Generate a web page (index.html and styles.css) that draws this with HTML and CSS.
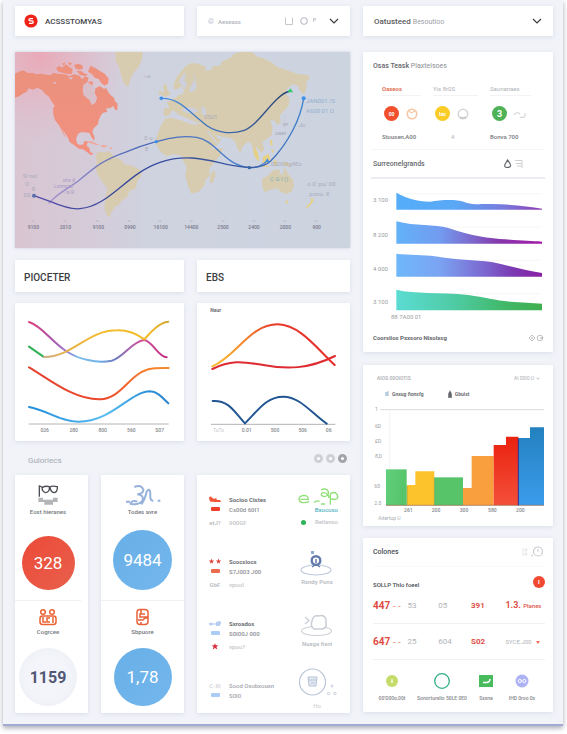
FILE: index.html
```html
<!DOCTYPE html>
<html lang="en">
<head>
<meta charset="utf-8">
<title>Dashboard</title>
<link rel="stylesheet" href="styles.css">
</head>
<body>
<main class="frame">
  <div class="main-col">
    <div class="pair top-row">
      <header class="card bar">
        <svg class="logo" viewBox="0 0 14 14" aria-hidden="true"><circle cx="7" cy="7" r="6.6" fill="#ee2418"/><path d="M9 4.6H6.2Q5 4.6 5 5.7T6.2 6.9H8Q9.2 6.9 9.2 8.1T8 9.4H5" fill="none" stroke="#fff" stroke-width="1.3"/></svg>
        <h1 class="brand">ACSSSTOMYAS</h1>
      </header>
      <div class="card bar tools">
        <svg class="tool-dot" viewBox="0 0 8 8" aria-hidden="true"><circle cx="4" cy="4" r="3" fill="#dcdfe6"/><path d="M4 4h4M1 2l3 2" stroke="#f7f8fa" stroke-width="1"/></svg>
        <span class="tool-name">Aeseass</span>
        <svg class="tool-icons" viewBox="0 0 34 10" aria-hidden="true"><path d="M1.500 1.500V8.500H8.500V1.500" fill="none" stroke="#c3c6cc"/><circle cx="20" cy="5" r="3.200" fill="none" stroke="#b9bdc4" stroke-width="1.100"/><path d="M29.500 6V2.500H31.500V4H29.500" fill="none" stroke="#b9bdc4" stroke-width=".8"/></svg>
        <button class="chev" aria-label="Open"><svg viewBox="0 0 10 6"><path d="M1 1l4 4 4-4"/></svg></button>
      </div>
    </div>

    <section class="map">
      <svg viewBox="45 21 1005 588" role="img" aria-label="World map">
        <defs>
          <linearGradient id="sea"><stop offset="0" stop-color="#d9c5d2"/><stop offset=".18" stop-color="#d6cad7"/><stop offset=".42" stop-color="#cfd3e0"/><stop offset="1" stop-color="#ccd4e0"/></linearGradient>
          <radialGradient id="glow" gradientUnits="userSpaceOnUse" cx="120" cy="30" r="270"><stop offset="0" stop-color="#ef9fae" stop-opacity=".75"/><stop offset="1" stop-color="#e9b6c4" stop-opacity="0"/></radialGradient>
          <linearGradient id="na" x2="0" y2="1"><stop offset="0" stop-color="#ea917c"/><stop offset="1" stop-color="#f39080"/></linearGradient>
          <linearGradient id="ln1"><stop offset="0" stop-color="#4a90dd"/><stop offset=".45" stop-color="#3f6db5"/><stop offset="1" stop-color="#27406f"/></linearGradient>
          <linearGradient id="ln2"><stop offset="0" stop-color="#a793cd"/><stop offset=".4" stop-color="#4c68b8"/><stop offset="1" stop-color="#4686d2"/></linearGradient>
          <linearGradient id="ln3"><stop offset="0" stop-color="#554ca9"/><stop offset=".35" stop-color="#35489b"/><stop offset=".8" stop-color="#3a5aa2"/><stop offset="1" stop-color="#3f83cf"/></linearGradient>
        </defs>
        <rect x="45" y="21" width="1005" height="588" fill="url(#sea)"/>
        <rect x="45" y="21" width="400" height="320" fill="url(#glow)"/>
        <g fill="url(#na)">
          <path d="M45 86L56 80 70 76 84 84 97 83 108 88 122 86 150 91 160 84 172 86 195 88 207 94 222 88 238 92 246 102 256 94 266 98 262 112 250 120 248 140 262 148 268 163 277 180 287 172 291 158 284 145 286 130 300 123 312 132 318 128 326 143 334 152 342 158 345 168 353 176 352 196 345 194 340 183 330 190 318 190 322 200 308 204 302 212 296 225 294 238 281 250 277 260 284 278 282 287 274 276 268 264 254 262 242 262 234 267 228 282 232 296 240 300 250 298 253 288 264 288 260 302 268 308 271 321 281 326 272 331 262 322 248 313 236 311 222 300 209 292 204 278 193 262 186 252 194 270 200 281 190 268 184 254 178 242 165 226 160 208 159 190 164 182 154 168 146 154 136 148 126 135 112 128 98 134 86 130 80 140 68 146 58 154 45 158Z"/>
          <path d="M271 62L284 68 296 76 312 85 326 100 324 116 313 122 302 112 296 102 284 98 276 88 264 80Z"/>
          <path d="M168 70L178 62 186 68 198 58 208 66 218 72 216 86 204 88 190 84 176 80ZM222 60L236 56 248 62 248 72 236 74 226 70ZM230 78L244 78 254 86 264 88 256 94 240 90ZM204 52L216 54 210 62ZM186 56L196 52 192 62ZM268 108L280 112 276 122 264 116Z"/>
          <path d="M254 290L272 288 290 296 300 300 286 299 270 293ZM304 300L320 301 318 307 304 306ZM328 306l8 2-3 6z" fill="#f2a598"/>
        </g>
        <path d="M250 123L268 114 282 128 283 145 290 160 284 172 276 180 268 165 250 150ZM205 98l14-2-6 8zM160 110l10 2-6 6z" fill="#d9bfca"/>
        <g fill="#d8ccb0">
          <path d="M347 21H428L425 46 416 66 402 82 392 98 387 120 380 126 370 110 362 86 356 64 346 46Z"/>
          <path d="M286 330L297 320 312 322 328 319 342 334 364 346 374 358 396 362 420 374 425 390 412 408 407 430 388 438 380 458 366 466 356 480 344 486 336 500 328 506 336 515 322 513 313 492 316 462 322 428 306 410 292 388 286 366 291 348Z"/>
          <path d="M524 136L520 120 528 98 542 82 556 64 574 54 596 56 618 66 614 78 634 74 640 62 660 62 668 48 690 40 702 26 720 21H758L770 34 794 42 812 50 832 66 862 76 890 86 926 91 928 102 918 112 920 128 912 148 900 138 895 124 880 118 862 130 855 143 868 160 866 182 850 200 840 210 842 232 832 240 822 226 810 228 818 246 815 270 798 284 786 290 792 308 788 324 778 316 768 306 770 330 778 346 768 340 760 316 752 292 742 292 728 304 722 322 714 316 706 290 690 278 670 276 648 270 640 264 654 280 664 284 650 302 624 314 610 286 596 262 602 242 580 238 568 226 562 236 550 216 544 212 552 232 538 222 530 202 516 196 510 208 498 215 490 207 492 190 508 190 500 172 520 162 536 150 548 148 552 136 546 124Z"/>
          <path d="M488 122L500 116 502 132 512 148 496 156 484 150 492 138ZM476 140l8-4 2 12-9 3z"/>
          <path d="M494 222L530 214 544 216 548 228 566 236 578 232 604 240 612 262 624 286 636 312 670 310 660 332 642 352 628 372 629 392 618 402 612 424 596 440 574 446 564 424 556 392 560 366 548 346 546 332 522 328 498 333 480 318 468 298 470 274 482 244Z"/>
          <path d="M632 388L645 374 646 392 637 416 629 410Z"/>
          <path d="M786 402L804 392 814 380 826 374 840 374 838 386 848 390 854 366 864 386 880 406 882 424 874 440 858 448 842 440 832 430 810 434 794 442 787 428Z"/>
        </g>
        <g fill="#e6cf87"><path d="M762 306L774 322 778 350 766 338 760 322ZM788 336L806 326 812 342 800 358 788 352ZM822 346l9 2-2 16-6-2zM846 352l16 3 12 10-18-4zM810 284l6 2 2 16-7-2zM814 312l8 4-5 9zM934 458L942 464 934 478 921 490 918 486 932 472ZM856 466l10 3-5 8zM780 360l26 2v4l-24-2z"/></g>
        <path d="M538 112l8-18 12-10-6 20 8 14-6 14M580 88l6 16-10 14-8 22 16-4 6-14M548 196l6-8 28 2 12 8-20 6-16-2zM606 186l8 2 4 14-4 12-8-10z" fill="#cdd0dc" stroke="#cdd0dc" stroke-width="3" stroke-linejoin="round"/>
        <path d="M502 214l28-8 18 8 22 10 34 12-26 3-20-9-28-7z" fill="#d0d3df"/>
        <path d="M850 208l6 18-8 12 4 12" fill="none" stroke="#c9cfda" stroke-width="5"/>
        <path d="M622 258l30 38" stroke="#ccd1de" stroke-width="4"/>

        <g class="route">
          <path d="M484 160C535 158 565 198 606 230 C640 262 690 270 730 257 C780 240 820 150 870 138" stroke="url(#ln1)"/>
          <path d="M147 474C180 440 205 430 235 408 C290 362 310 345 375 322 C420 303 440 298 469 290 C520 276 550 272 590 277 C650 287 670 360 748 368 C770 370 785 362 802 347" stroke="url(#ln2)"/>
          <path d="M102 452L152 470 C190 486 215 494 240 491 C330 483 380 385 480 352 C560 325 620 345 680 358 C740 370 785 373 812 348 C865 295 902 220 911 160" stroke="url(#ln3)"/>
        </g>
        <g fill="#3d8fea"><circle cx="484" cy="160" r="5.500"/><circle cx="469" cy="290" r="5"/><circle cx="911" cy="160" r="6"/><path d="M802 340l7 11h-14z"/><circle cx="748" cy="368" r="5" fill="#36659f"/><circle cx="102" cy="452" r="6" fill="#5a6fae"/><path d="M871 130l8 12h-16z" fill="#2ecb66"/></g>

        <g class="map-note">
          <text x="68" y="400">S! no!</text><text x="75" y="422">O</text><text x="95" y="438">8</text><text x="70" y="456">SS</text>
          <text x="188" y="411" class="violet">ons d</text><text x="162" y="429" class="violet">Lonnoss</text><text x="190" y="447" class="violet">- is  R</text>
          <text x="433" y="286">0 o -</text><text x="435" y="318">E</text><text x="432" y="100">--o</text>
          <text x="612" y="221">0501</text><text x="850" y="243">er</text><text x="896" y="245">Jo</text><text x="824" y="270">oaer</text>
          <text x="918" y="174" class="big blue">JAN001 /S</text><text x="918" y="204" class="big blue">A600 01 O</text>
          <text x="808" y="363" class="big">.0S0S9g4Eo</text><text x="810" y="407" class="big teal">C G I ()</text>
          <text x="922" y="422" class="big">o 0' pu/ 00</text><text x="928" y="453" class="big">ponu. X</text>
        </g>
        <g class="map-axis">
          <text x="100" y="552">9100</text><text x="196" y="552">2010</text><text x="295" y="552">9100</text><text x="390" y="552">0990</text><text x="482" y="552">16100</text><text x="574" y="552">14400</text><text x="669" y="552">2500</text><text x="762" y="552">2400</text><text x="856" y="552">2000</text><text x="950" y="552">900</text>
        </g>
        <path d="M95 528h8M191 528h8M288 528h8M384 528h8M476 528h8M570 528h8M665 528h8M758 528h8M850 528h8M945 528h8" stroke="#a9a9b8" stroke-width="2"/>
      </svg>
    </section>

    <div class="pair titles">
      <h2 class="card title">PIOCETER</h2>
      <h2 class="card title">EBS</h2>
    </div>

    <div class="pair charts">
      <section class="card">
        <svg class="plot" viewBox="45 159 507 414" role="img" aria-label="Proceter trend">
          <defs>
            <linearGradient id="pa" gradientUnits="userSpaceOnUse" x1="86" x2="503" y1="0" y2="0"><stop offset="0" stop-color="#e0417e"/><stop offset=".15" stop-color="#b04fa0"/><stop offset=".27" stop-color="#9c7ad2"/><stop offset=".36" stop-color="#79bdea"/><stop offset=".5" stop-color="#6eb2e8"/><stop offset=".63" stop-color="#7077c0"/><stop offset=".8" stop-color="#d0539b"/><stop offset="1" stop-color="#c22d82"/></linearGradient>
            <linearGradient id="pb" gradientUnits="userSpaceOnUse" x1="132" x2="506" y1="0" y2="0"><stop offset="0" stop-color="#cfae83"/><stop offset=".2" stop-color="#e9b144"/><stop offset=".5" stop-color="#f4bd2c"/><stop offset=".85" stop-color="#efba24"/><stop offset="1" stop-color="#cfa732"/></linearGradient>
            <linearGradient id="pc" gradientUnits="userSpaceOnUse" x1="86" x2="506" y1="0" y2="0"><stop offset="0" stop-color="#e5402f"/><stop offset=".55" stop-color="#ec4a2c"/><stop offset=".85" stop-color="#f6802d"/><stop offset="1" stop-color="#f58a2e"/></linearGradient>
            <linearGradient id="pd" gradientUnits="userSpaceOnUse" x1="86" x2="506" y1="0" y2="0"><stop offset="0" stop-color="#218edd"/><stop offset=".55" stop-color="#58bdf0"/><stop offset=".8" stop-color="#3097dd"/><stop offset="1" stop-color="#2a83cc"/></linearGradient>
          </defs>
          <path d="M86 522H506" stroke="#b4b4b6" stroke-width="3"/>
          <g class="curve">
            <path d="M87 216C125 228 150 270 198 303C235 328 290 341 335 332C370 322 395 275 432 270C455 270 475 322 500 322" stroke="url(#pa)"/>
            <path d="M87 290L130 320" stroke="#32b054"/>
            <path d="M132 321C220 320 260 241 352 241C390 240 415 255 433 268C450 250 475 218 505 215" stroke="url(#pb)"/>
            <path d="M87 352C140 382 220 450 300 448C365 445 385 375 445 358C465 353 485 354 506 354" stroke="url(#pc)"/>
            <path d="M87 471C140 480 180 515 235 515C335 516 390 424 450 424C475 425 488 445 505 460" stroke="url(#pd)"/>
          </g>
          <g class="axis"><text x="134" y="545">026</text><text x="221" y="545">280</text><text x="308" y="545">800</text><text x="394" y="545">560</text><text x="479" y="545">S07</text></g>
        </svg>
      </section>
      <section class="card">
        <svg class="plot" viewBox="591 159 459 414" role="img" aria-label="EBS trend">
          <defs><linearGradient id="ea" gradientUnits="userSpaceOnUse" x1="636" x2="1006" y1="0" y2="0"><stop offset="0" stop-color="#f7bd2e"/><stop offset=".15" stop-color="#f7a12d"/><stop offset=".35" stop-color="#ee6a2c"/><stop offset=".5" stop-color="#e93a2b"/><stop offset="1" stop-color="#e62c2a"/></linearGradient></defs>
          <text x="631" y="186" class="tag">Naur</text>
          <path d="M633 523H1006" stroke="#b4b4b6" stroke-width="3"/>
          <g class="curve">
            <path d="M637 357C700 325 740 338 790 345C860 358 925 358 1005 318" stroke="#dd2b31"/>
            <path d="M637 349C710 318 750 222 834 223C900 225 950 295 1004 345" stroke="url(#ea)"/>
            <path d="M638 453C690 450 705 490 735 520C775 480 800 440 850 440C900 440 935 490 980 521" stroke="#225693"/>
          </g>
          <g class="axis"><text x="655" y="545" class="pale">TuTs</text><text x="740" y="545">0.01</text><text x="825" y="545">500</text><text x="908" y="545">506</text><text x="986" y="545">06</text></g>
        </svg>
      </section>
    </div>

    <div class="section-head">
      <h2>Guloriecs</h2>
      <div class="dots"><button aria-label="First"></button><button aria-label="Second"></button><button class="on" aria-label="Third"></button></div>
    </div>

    <div class="bottom">
      <div class="card metrics slim">
        <section class="metric">
          <svg class="glyph tall" viewBox="103 60 78 66" aria-hidden="true"><path d="M113 101h14v6h30v-6h14v13h-14v8h-26v-8h-18z" fill="#b4b5b7"/><path d="M116 98V66L126 70Q134 65 146 68Q148 84 135 86Q124 84 124 70M148 70Q152 64 170 68Q171 84 160 86Q150 84 148 70" fill="none" stroke="#4c4f55" stroke-width="4"/></svg>
          <h3>Eost hieranes</h3>
          <div class="dial-box"><div class="dial red">328</div></div>
        </section>
        <section class="metric second">
          <svg class="glyph" viewBox="0 0 20 18" aria-hidden="true"><g fill="none" stroke="#ea6334" stroke-width="1.500"><circle cx="5" cy="4" r="2.300"/><circle cx="14" cy="4" r="2.300"/><rect x="2" y="8" width="16" height="8.500" rx="2.500"/><path d="M5 9v5h3M12 10H9v4h3M15 9v6"/></g></svg>
          <h3>Cogrcee</h3>
          <div class="dial-box"><div class="dial mist">1159</div></div>
        </section>
      </div>
      <div class="card metrics">
        <section class="metric">
          <svg class="glyph wide" viewBox="375 55 108 66" aria-hidden="true"><path d="M403 64Q425 55 430 72Q430 84 412 86Q432 88 428 104Q418 120 392 114Q396 102 412 108M424 116Q436 100 440 78Q450 64 451 84Q449 106 460 105M378 108h12M473 105h8" fill="none" stroke="#95b1dc" stroke-width="6"/></svg>
          <h3>Todes avre</h3>
          <div class="dial-box"><div class="dial blue">9484</div></div>
        </section>
        <section class="metric second">
          <svg class="glyph" viewBox="0 0 20 18" aria-hidden="true"><g fill="none" stroke="#e8633a" stroke-width="1.500"><rect x="4" y="1.500" width="11" height="15" rx="3"/><path d="M8 2v4M12 6H7v3h8M5 12h5l2-2h3M8 16v-2"/></g></svg>
          <h3>Sbpuore</h3>
          <div class="dial-box"><div class="dial blue">1,78</div></div>
        </section>
      </div>
      <ul class="card list">
        <li>
          <div class="marks"><svg viewBox="0 0 12 7"><path d="M0 2Q1-.5 3 1.500L5 3 7 2l1 2h3l1 2H6L1 5.500z" fill="#f15535"/></svg><i class="pill p-red"></i><span>etJ?</span></div>
          <div class="copy"><strong>Socioo Cistes</strong><b>Cs00d 60I1</b><span>900GF</span></div>
          <div class="art"><svg class="low" viewBox="303 125 126 54"><path d="M316 162H340Q340 150 326 150Q312 152 312 162Q314 173 330 172L343 169M357 172Q364 164 374 168M378 134Q396 126 400 140Q402 152 388 154Q376 152 380 144Q390 138 400 150L402 158M378 176h12M406 178V148Q408 140 420 142Q430 148 428 158Q420 166 408 160" fill="none" stroke="#8fe077" stroke-width="4"/></svg><em class="teal">Bxocoso</em><em class="status">Reilanso</em></div>
        </li>
        <li>
          <div class="marks"><svg viewBox="0 0 12 7"><path d="M2.500.5l.7 2h2l-1.600 1.200.6 2-1.700-1.200L.8 5.700l.6-2L-.2 2.500h2zM9.500.5l.7 2h2l-1.600 1.200.6 2-1.700-1.200-1.700 1.200.6-2L6.800 2.500h2z" fill="#dd3d35"/></svg><i class="pill p-coral"></i><span>GbF</span></div>
          <div class="copy"><strong>Scocsiocs</strong><b>S7J003 J00</b><span>vpooI</span></div>
          <div class="art"><svg viewBox="0 0 42 28"><ellipse cx="20" cy="21" rx="15" ry="5" fill="none" stroke="#bcc8dc" stroke-width="1.100"/><circle cx="20" cy="11.500" r="4.300" fill="#fff" stroke="#637bab" stroke-width="2.400"/><path d="M16 18l3-2M24 18l-3-2M20 10v4" stroke="#637bab" stroke-width="1.500"/><rect x="15" y="2" width="3" height="3" fill="#8fa9d6"/></svg><em>Rxndy Pons</em></div>
        </li>
        <li>
          <div class="marks"><svg viewBox="0 0 12 7"><path d="M0 4h7" stroke="#b7cdef" stroke-width="1.200"/><circle cx="2" cy="4" r="1.500" fill="#b7cdef"/><path d="M7 2l4-1 1.500 2-2 3H7z" fill="#b7cdef"/></svg><i class="pill p-blue"></i><svg viewBox="0 0 12 7"><path d="M6 .2l.9 2h2.300L7.500 3.900l.8 2.600L6 5.100 3.700 6.500l.8-2.600L2.800 2.200h2.300z" fill="#d8323e"/></svg></div>
          <div class="copy"><strong>Sxroados</strong><b>S0I00J 000</b><span>vpoo?</span></div>
          <div class="art"><svg viewBox="0 0 42 28"><ellipse cx="20.500" cy="20" rx="15" ry="4.500" fill="none" stroke="#cdd0d6" stroke-width="1.100"/><path d="M18 18Q14 15 16 10Q17 4 22 5Q29 3 30 9V15Q29 18 25 18Z" fill="#fff" stroke="#c9cdd6" stroke-width="1.500"/><path d="M9 6l4 3.500L9 13" fill="none" stroke="#c9ced8" stroke-width="1.300"/></svg><em>Nuxga fixni</em></div>
        </li>
        <li>
          <div class="marks"><span class="faint">C-XI</span><i class="pill p-blue"></i></div>
          <div class="copy soft"><b>Sood Oxobxouxn</b><b>S0I0</b></div>
          <div class="art"><svg viewBox="0 0 42 28"><circle cx="16.500" cy="9" r="13" fill="#fff" stroke="#b9c5d8" stroke-width="1.200"/><path d="M12 4h9l-1 9h-7zM12 7h9M15 10h4" fill="#e3e8f0" stroke="#b6c3d7" stroke-width="1"/><g fill="none" stroke="#c3cbd9" stroke-width=".9"><circle cx="36" cy="13" r="1"/><circle cx="32.500" cy="20.500" r="1.200"/><circle cx="39" cy="20.500" r="1.200"/></g></svg><em class="faint">Ho</em></div>
        </li>
      </ul>
    </div>
  </div>

  <aside class="side-col">
    <button class="card bar picker"><span>Oatusteed <small>Besoutioo</small></span><svg viewBox="0 0 10 6"><path d="M1 1l4 4 4-4"/></svg></button>

    <section class="card plans">
      <h2>Osas Teask <span>Plaxteisoes</span></h2>
      <div class="plan-grid">
        <div class="plan"><h3 class="hot">Oaxeos</h3><div class="icons"><b class="chip c-red">00</b><svg viewBox="0 0 12 12"><circle cx="6" cy="6" r="4.700" fill="none" stroke="#f7c7a5" stroke-width="1.600"/><path d="M3 2l2 3 4-2" fill="none" stroke="#f4b98f"/></svg></div><p>Stousen,A00</p></div>
        <div class="plan"><h3>Yis 8r0S</h3><div class="icons"><b class="chip c-yellow">lao</b><svg viewBox="0 0 12 12"><circle cx="6" cy="6" r="4.700" fill="none" stroke="#d5d7da" stroke-width="1.600"/><path d="M3 9q3 2 6 0" fill="none" stroke="#bbb"/></svg></div><p class="mid">4</p></div>
        <div class="plan"><h3>Saunanaes</h3><div class="icons"><b class="chip c-green big-num">3</b><svg viewBox="0 0 12 12"><path d="M0 7Q3 3 6 6M6 9q6 2 5-4" fill="none" stroke="#d2d4d8" stroke-width="1.100"/></svg></div><p>Bonva 700</p></div>
      </div>
      <div class="sub-head"><h2>Surreonelgrands</h2><svg viewBox="0 0 22 10" aria-hidden="true"><path d="M4.500 1L2 5.500Q1 8.500 4 8.500T7.500 7Q8 5 4.500 1Z" fill="none" stroke="#63666b" stroke-width="1.200"/><path d="M12 1.500h7v3h-6M14 7h5V4.500M19 7v2" fill="none" stroke="#c7c9ce" stroke-width=".9"/></svg></div>
      <svg class="plot" viewBox="24 88 570 432" role="img" aria-label="Area charts">
        <defs>
          <linearGradient id="a1"><stop offset="0" stop-color="#55adf8"/><stop offset=".4" stop-color="#5aa8f6"/><stop offset=".75" stop-color="#7a78dc"/><stop offset="1" stop-color="#8b3db4"/></linearGradient>
          <linearGradient id="a2"><stop offset="0" stop-color="#62b2f8"/><stop offset=".3" stop-color="#729bf0"/><stop offset=".52" stop-color="#7d68cc"/><stop offset=".7" stop-color="#8438ac"/><stop offset="1" stop-color="#a31aa8"/></linearGradient>
          <linearGradient id="a3"><stop offset="0" stop-color="#6eb8fa"/><stop offset=".3" stop-color="#7ba3f2"/><stop offset=".6" stop-color="#7b68d0"/><stop offset=".8" stop-color="#7b39b2"/><stop offset="1" stop-color="#8a1fa3"/></linearGradient>
          <linearGradient id="a4"><stop offset="0" stop-color="#5bdcd3"/><stop offset=".4" stop-color="#4fcba4"/><stop offset=".75" stop-color="#40b868"/><stop offset="1" stop-color="#3fae4e"/></linearGradient>
        </defs>
        <path d="M124 132H560M124 232H560M124 332H560M124 432H560" stroke="#f1f1f4" stroke-width="2"/>
        <path d="M124 129C155 147 185 154 225 156C265 148 310 150 325 156C350 166 370 163 410 163C470 164 520 170 561 177V180H124Z" fill="url(#a1)"/>
        <path d="M124 215C180 230 240 224 280 235C340 257 410 267 450 269C500 273 530 274 561 276V282H124Z" fill="url(#a2)"/>
        <path d="M124 312C170 316 220 316 250 321C300 330 360 330 410 337C460 348 510 362 561 370V381H124Z" fill="url(#a3)"/>
        <path d="M124 420C180 434 250 426 340 436C390 443 420 452 465 456C500 459 530 459 561 462V482H124Z" fill="url(#a4)"/>
        <g class="scale"><text x="54" y="158">3.100</text><text x="54" y="261">8 200</text><text x="54" y="365">4 000</text><text x="54" y="464">3.100</text><text x="108" y="508">88 7A00 01</text></g>
      </svg>
      <div class="foot"><h2>Coorsiios Pxxsoro Nixolxsg</h2><svg viewBox="0 0 16 10" aria-hidden="true"><path d="M4 2L7 5 4 8 1 5Z" fill="none" stroke="#bfc1c5" stroke-width="1"/><path d="M4 4v2" stroke="#aaa"/><circle cx="12" cy="5" r="2.800" fill="none" stroke="#bfc1c5"/><path d="M12 5h3" stroke="#aaa"/></svg></div>
    </section>

    <section class="card bars">
      <div class="bars-head"><h2>AIOS 00OIOTIS</h2><button>Al 00I0 U <svg viewBox="0 0 10 6"><path d="M1 1l4 4 4-4"/></svg></button></div>
      <div class="legend"><span><svg viewBox="0 0 6 8"><path d="M1 2h3v4H1z" fill="#b9d2e4"/><path d="M4 1v5" stroke="#aab" stroke-width=".8"/></svg>Gnxug fionsfg</span><span><svg viewBox="0 0 6 8"><path d="M1 8V4L3 0 5 4V8Z" fill="#85888d"/><path d="M3 2v5" stroke="#333" stroke-width=".8"/></svg>Gbuixt</span></div>
      <svg class="plot" viewBox="24 141 570 372" role="img" aria-label="Bar chart">
        <defs>
          <linearGradient id="g1" x2="1" y2=".3"><stop offset="0" stop-color="#62cf7c"/><stop offset="1" stop-color="#56c46a"/></linearGradient>
          <linearGradient id="g2" x2="0" y2="1"><stop offset="0" stop-color="#ea220f"/><stop offset="1" stop-color="#f4503a"/></linearGradient>
          <linearGradient id="g3" x2="0" y2="1"><stop offset="0" stop-color="#2381bf"/><stop offset="1" stop-color="#3b9cec"/></linearGradient>
        </defs>
        <path d="M76 164H568" stroke="#dfd9da" stroke-width="3"/><path d="M104 166V450" stroke="#eeecee" stroke-width="2"/>
        <path d="M93 343H155V451H93Z" fill="url(#g1)"/><path d="M156 390H181V349H238V451H156Z" fill="#fcc32d"/><path d="M238 367H324V451H238Z" fill="#57c46a"/><path d="M324 399H350V303H416V451H324Z" fill="#fa9f3d"/><path d="M416 270H453V245H490V451H416Z" fill="url(#g2)"/><path d="M490 249H525V217H567V451H490Z" fill="url(#g3)"/>
        <path d="M93 451H567" stroke="#9a6a4c" stroke-opacity=".7" stroke-width="3"/><path d="M490 250V451" stroke="#2d2a86" stroke-width="3"/><path d="M238 367V451M156 392V451" stroke="#6d8a30" stroke-opacity=".7" stroke-width="2"/>
        <g class="scale small"><text x="60" y="168">1</text><text x="60" y="218">6D</text><text x="60" y="264">£D</text><text x="60" y="309">8,D</text><text x="58" y="399">60</text><text x="58" y="451">2.0</text></g>
        <g class="axis"><text x="160" y="472">261</text><text x="243" y="472">200</text><text x="327" y="472">300</text><text x="412" y="472">580</text><text x="496" y="472">200</text></g>
        <text x="70" y="495" class="note">Aitertup U</text>
      </svg>
    </section>

    <section class="card colours">
      <div class="col-head"><h2>Colones</h2><svg viewBox="0 0 24 12" aria-hidden="true"><path d="M2 2v8M5 2v8M2 4h5M2 8h5" stroke="#e6e8eb"/><circle cx="17" cy="5.500" r="4.500" fill="none" stroke="#c9cbd0" stroke-width="1.200"/><path d="M17 3v3M10 9l2 1" stroke="#c9cbd0"/></svg></div>
      <div class="col-sub"><h3>SOLLP Thlo foeel</h3><b class="alert">I</b></div>
      <table>
        <tr><td class="num">447 <i>- -</i></td><td>53</td><td>05</td><td class="hot">391</td><td class="price">1.3. <small>Planes</small></td></tr>
        <tr><td class="num">647 <i>- -</i></td><td>25</td><td>604</td><td class="hot">S02</td><td class="thin">SYCE.J00 <svg viewBox="0 0 4 3"><path d="M0 0h4L2 3z" fill="#f0705a"/></svg></td></tr>
      </table>
      <div class="kinds">
        <div><svg viewBox="0 0 16 16"><circle cx="8" cy="8" r="6" fill="#c5dc6a"/><path d="M8 6v4" stroke="#fff" stroke-width="1.300"/></svg><span>00'D00o,00t</span></div>
        <div><svg viewBox="0 0 16 16"><circle cx="8" cy="8" r="7.300" fill="none" stroke="#2fae80" stroke-width="1.300"/></svg><span>Sonorturelio 50LE 0E0</span></div>
        <div><svg viewBox="0 0 16 16"><rect x="1" y="2" width="14" height="12" fill="#48bb5c"/><path d="M5 9.500h4Q12 9 12 6" fill="none" stroke="#fff" stroke-width="1.400"/></svg><span>Sxxna</span></div>
        <div><svg viewBox="0 0 16 16"><circle cx="8" cy="8" r="6.500" fill="#adb2f5"/><circle cx="5.800" cy="8" r="1.600" fill="none" stroke="#fff"/><circle cx="10.300" cy="8" r="1.600" fill="none" stroke="#fff"/></svg><span>IHD 0roo 0s</span></div>
      </div>
    </section>
  </aside>
</main>
</body>
</html>
```
FILE: styles.css
```css
* { box-sizing: border-box; }
body { margin: 0; background: #fff; font-family: Roboto, "Liberation Sans", sans-serif; color: #4b4e54; }
h1, h2, h3, p, ul { margin: 0; padding: 0; font-weight: 500; }
svg { display: block; }
button { border: 0; padding: 0; background: none; font: inherit; color: inherit; }
i, em { font-style: normal; }

.frame {
  display: grid; grid-template-columns: 335fr 190fr; gap: 13px; align-items: start;
  margin: 0 4px 9px 3px; padding: 6px 10px 11px 12px;
  background: #f1f3f8; border-bottom: 2px solid #a4abd0;
  box-shadow: 0 2px 5px rgba(60, 65, 90, .45);
}
.main-col, .side-col { min-width: 0; }
.card { background: #fff; border-radius: 1px; box-shadow: 0 1px 4px rgba(150, 162, 190, .26); }
.plot, .map svg { width: 100%; height: auto; }

.pair { display: grid; grid-template-columns: 169fr 153fr; gap: 13px; }
.bar { display: flex; align-items: center; height: 30px; padding: 0 11px 0 9px; width: 100%; }
.logo { width: 14px; height: 14px; margin-right: 7px; }
.brand { font-size: 8px; color: #424449; }
.tools { padding-left: 10px; }
.tool-dot { width: 8px; height: 8px; margin-right: 3px; }
.tool-name { font-size: 6px; font-weight: 500; color: #b0b2b8; }
.tool-icons { width: 34px; height: 10px; margin-left: auto; }
.chev { margin-left: 11px; }
.chev svg, .picker svg { width: 10px; height: 6px; }
.chev path, .picker path, .bars-head path { fill: none; stroke: #3a3c40; stroke-width: 1.2; }
.picker { justify-content: space-between; font-size: 8px; font-weight: 500; color: #5a5c61; }
.card.picker { padding-left: 11px; background: #fff; }
.picker small { font-size: 7px; font-weight: 400; color: #a0a2a7; }

.map { margin: 16px 0 12px; box-shadow: 0 0 3px rgba(150, 162, 190, .4); }
.route path { fill: none; stroke-width: 4; stroke-linecap: round; }
.map-note text { font-size: 18px; fill: #a9aaba; }
.map-note .big { font-size: 18px; }
.map-note .blue { fill: #93afcf; }
.map-note .teal { fill: #78b6b8; }
.map-note .violet { font-size: 15px; fill: #a899c4; }
.map-axis text { font-size: 15px; font-weight: 500; fill: #77798a; text-anchor: middle; }

.title { display: flex; align-items: center; height: 32px; padding: 2px 9px 0; font-size: 10px; color: #3b3d42; }
.charts { margin-top: 11px; }
.curve path { fill: none; stroke-width: 6; stroke-linecap: round; }
.axis text { font-size: 15px; font-weight: 500; fill: #85878c; text-anchor: middle; }
.axis .pale { fill: #c6c8cc; font-weight: 400; }
.tag { font-size: 15px; font-weight: 700; fill: #6b6d72; }

.section-head { display: flex; align-items: center; justify-content: space-between; height: 34px; padding: 4px 3px 0 13px; }
.section-head h2 { font-size: 8px; font-weight: 400; color: #a5a8b0; }
.dots { display: flex; gap: 3px; padding-bottom: 4px; }
.dots button { width: 9px; height: 9px; border: 3px solid #ced0d5; border-radius: 50%; background: #fff; }
.dots .on { border-color: #a2a4a9; }

.bottom { display: grid; grid-template-columns: 73fr 83fr 153fr; gap: 13px; }
.slim { padding-right: 7px; }
.metric { display: flex; flex-direction: column; align-items: center; padding: 9px 0 10px; }
.metric h3 { font-size: 6px; line-height: 12px; color: #75777c; }
.metric.second { padding: 7px 0 6px; border-top: 1px solid #eff0f4; }
.glyph { width: 20px; height: 18px; }
.glyph.tall { width: 26px; height: 22px; }
.glyph.wide { width: 36px; height: 22px; }
.dial-box { display: flex; align-items: end; height: 60px; margin-top: 12px; }
.second .dial-box { height: 58px; margin-top: 10px; }
.dial { display: grid; place-items: center; width: 59px; height: 60px; border-radius: 50%; font-size: 17px; color: #fff; }
.second .dial { width: 58px; height: 58px; }
.red { width: 53px; height: 54px; background: linear-gradient(135deg, #ec4a38, #e8604c); }
.blue { background: linear-gradient(135deg, #69b0e8, #72b6ec); }
.mist { background: radial-gradient(#f3f5fa 50%, #e9ecf4); color: #535876; font-size: 16px; font-weight: 700; }

.list { display: grid; gap: 19px; padding: 12px 12px 0; list-style: none; align-content: start; }
.list li { display: grid; grid-template-columns: 12px 1fr 42px; column-gap: 8px; min-height: 40px; font-size: 6px; }
.marks, .copy { display: grid; grid-template-rows: 10px 10px; grid-auto-rows: 16px; align-items: center; align-content: start; padding-top: 7px; white-space: nowrap; }
.marks { color: #b6b8bd; justify-items: center; }
.marks svg { width: 12px; height: 7px; }
.pill { width: 9px; height: 4px; border-radius: 1px; }
.p-red { background: #ee3f2c; }
.p-coral { background: #ea6c4e; }
.p-blue { background: #a9cdf7; }
.copy { font-size: 6px; }
.copy strong { font-weight: 700; color: #6d6f74; }
.copy b { font-weight: 500; color: #8d8f94; }
.copy span { color: #c2c4c8; }
.copy.soft b { color: #a5a7ac; }
.art { display: flex; flex-direction: column; align-items: center; }
.art svg { width: 42px; height: 28px; overflow: visible; }
.art .low { height: 18px; }
.art em { font-size: 6px; line-height: 10px; font-weight: 500; color: #b2b5bc; white-space: nowrap; }
.art .teal { align-self: end; color: #4cb0bd; }
.art .status { display: flex; align-items: center; gap: 9px; align-self: end; margin-top: 2px; color: #bfc1c6; }
.status::before { content: ""; width: 5px; height: 5px; border-radius: 50%; background: #2eb457; }
.faint, .art .faint { color: #d0d2d6; }

.plans { margin-top: 16px; }
.plans h2 { font-size: 7px; color: #66686d; white-space: nowrap; }
.plans > h2 { padding: 9px 10px 0; line-height: 10px; }
.plans h2 span { color: #8c8e93; font-weight: 400; }
.plan-grid { display: grid; grid-template-columns: 51fr 57fr 53fr; padding: 12px 10px 7px 19px; }
.plan h3 { font-size: 6px; line-height: 12px; font-weight: 400; color: #b0b2b7; border-bottom: 1px solid #f3f3f5; margin-right: 12px; }
.plan .hot { color: #e07358; font-weight: 700; }
.icons { display: flex; align-items: center; gap: 7px; padding: 10px 0 11px 2px; }
.icons svg { width: 12px; height: 12px; }
.chip { display: grid; place-items: center; width: 15px; height: 15px; border-radius: 50%; color: #fff; font-size: 5px; font-weight: 700; }
.chip.big-num { font-size: 9px; }
.c-red { background: #f24f2f; }
.c-yellow { background: #fbcb26; }
.c-green { background: #4fb257; }
.plan p { font-size: 6px; line-height: 10px; color: #77797e; white-space: nowrap; }
.plan .mid { padding-left: 18px; color: #b9bbc0; }
.sub-head { display: flex; justify-content: space-between; align-items: center; height: 30px; margin: 0 8px; padding: 0 20px 0 2px; border-top: 1px solid #f5f5f7; border-bottom: 2px solid #ebecf2; }
.sub-head svg { width: 22px; height: 10px; }
.scale text { font-size: 18px; fill: #9b9da2; }
.scale.small text { font-size: 15px; }
.note { font-size: 15px; fill: #aaacb1; }
.foot { display: flex; justify-content: space-between; align-items: center; height: 29px; padding: 0 9px 0 10px; }
.plans .foot h2 { font-size: 6px; font-weight: 700; }
.foot svg { width: 16px; height: 10px; }

.bars { margin-top: 13px; }
.bars-head { display: flex; justify-content: space-between; align-items: center; padding: 8px 13px 0 14px; height: 18px; font-size: 5px; color: #aaacb1; }
.bars-head h2 { font-size: 5px; font-weight: 500; }
.bars-head button { display: flex; align-items: center; gap: 2px; }
.bars-head svg { width: 4px; height: 3px; }
.bars-head path { stroke: #aaacb1; stroke-width: 2; }
.legend { display: grid; grid-template-columns: 62fr 90fr; padding: 3px 15px 0 21px; height: 19px; align-items: center; font-size: 5px; font-weight: 700; color: #6d6f74; }
.legend span { display: flex; align-items: center; gap: 2px; }
.legend svg { width: 6px; height: 8px; }

.colours { margin-top: 12px; padding: 0 8px 9px 10px; }
.col-head { display: flex; justify-content: space-between; align-items: center; height: 29px; border-bottom: 1px solid #fafafb; }
.col-head h2 { font-size: 7px; }
.col-head svg { width: 24px; height: 12px; }
.col-sub { display: flex; justify-content: space-between; align-items: center; height: 29px; }
.col-sub h3 { font-size: 6px; padding-top: 6px; }
.alert { display: grid; place-items: center; width: 12px; height: 12px; border-radius: 50%; background: #f04a33; color: #fff; font-size: 6px; }
.colours table { width: 100%; border-collapse: collapse; table-layout: fixed; font-size: 8px; color: #b1b3b8; }
.colours td { height: 36px; padding: 0; border-bottom: 1px solid #f1f2f5; white-space: nowrap; }
.colours tr:first-child td { height: 27px; padding-bottom: 8px; }
.colours td:nth-child(1) { width: 20%; }
.colours td:nth-child(2) { width: 18%; }
.colours td:nth-child(3) { width: 19%; }
.colours td:nth-child(4) { width: 20%; }
.colours .num { font-size: 10px; font-weight: 700; color: #dd4b42; }
.num i { font-size: 8px; font-weight: 700; color: #ec8c7c; }
.colours .hot { font-weight: 700; color: #dd5148; }
.price { font-size: 9px; font-weight: 700; color: #dd5148; }
.price small { font-size: 6px; font-weight: 500; }
.thin { font-size: 6px; }
.thin svg { display: inline-block; width: 4px; height: 3px; margin-left: 3px; }
.kinds { display: grid; grid-template-columns: 38fr 62fr 26fr 46fr; padding-top: 13px; }
.kinds div { display: flex; flex-direction: column; align-items: center; gap: 4px; min-width: 0; }
.kinds svg { width: 16px; height: 16px; }
.kinds span { font-size: 5px; line-height: 10px; font-weight: 500; color: #85878c; white-space: nowrap; }
```
